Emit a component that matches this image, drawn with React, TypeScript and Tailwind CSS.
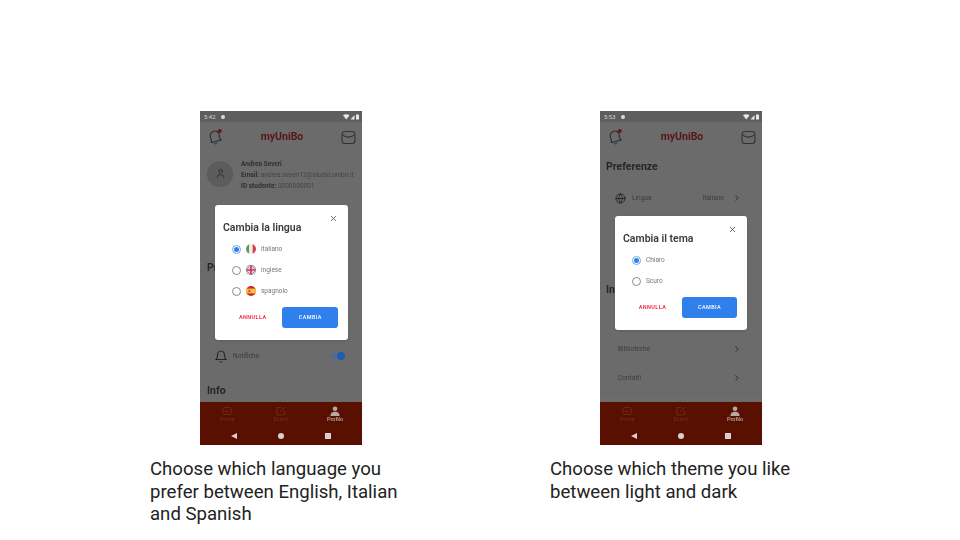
// myUniBo settings slide: language and theme dialogs shown on two phones
import { useId, type ReactNode } from "react";
import { ChevronRight, Globe, User, X } from "lucide-react";

function StatusBar({ time }: { time: string }) {
  return (
    <div className="flex h-[11px] items-center justify-between bg-[#5e5e5e] pl-[4px] pr-[2px] text-[6px] text-[#d8d8d8]">
      <div className="flex items-center gap-[5px]">
        <span>{time}</span>
        <span className="h-[4px] w-[4px] rounded-full bg-[#d8d8d8]" />
      </div>
      <svg width="17" height="6" viewBox="0 0 17 6" fill="#e8e8e8">
        <path d="M0 1.2C2-.2 4.500-.2 6.500 1.200L3.250 5.500Z" />
        <path d="M7.500 5.500L11.500 1V5.500Z" />
        <rect x="13" y="0.500" width="3" height="5" rx="0.500" />
      </svg>
    </div>
  );
}

function AppHeader() {
  return (
    <div className="flex h-[30px] items-center justify-between pl-[8px] pr-[6px]">
      <svg width="15" height="16" viewBox="0 0 15 16" fill="none">
        <path d="M4.500 2.800C7.500 1 11 2.500 11.200 6C11.300 8.500 12 9.800 13 11L3.500 13.500C3.900 11.800 3.300 10.500 2.400 8.800C1.500 6.800 2.500 4 4.500 2.800Z" stroke="#2a3030" strokeWidth="1.200" />
        <path d="M6 14.200C7 15.400 8.500 15 9 13.600" stroke="#2a4a48" strokeWidth="1.200" />
        <circle cx="11.800" cy="2" r="2" fill="#7a1414" />
      </svg>
      <span className="text-[10.500px] font-bold text-[#5a1616]">myUniBo</span>
      <svg width="15" height="15" viewBox="0 0 15 15" fill="none" stroke="#333333" strokeWidth="1.100">
        <rect x="1" y="1.500" width="13" height="12" rx="3" />
        <path d="M1.500 4.500C4.500 8 10.500 8 13.500 4.500" />
      </svg>
    </div>
  );
}

function BottomNav() {
  return (
    <div className="bg-[#5a1000] pb-[1px]">
      <div className="flex h-[25px] items-center justify-between px-[14px] text-[5.500px] leading-[7px]">
        <div className="flex w-[26px] flex-col items-center text-[#74301f]">
          <svg width="10" height="10" viewBox="0 0 10 10" fill="none" stroke="#74301f" strokeWidth="0.800">
            <rect x="1" y="1.500" width="8" height="7" rx="1" />
            <path d="M3 4.500L5 6L7 4.500" />
          </svg>
          <span>Home</span>
        </div>
        <div className="flex w-[26px] flex-col items-center text-[#74301f]">
          <svg width="10" height="10" viewBox="0 0 10 10" fill="none" stroke="#74301f" strokeWidth="0.800">
            <path d="M8.500 5V9H1V1.500H5" />
            <path d="M4 6L9 1" />
          </svg>
          <span>Esami</span>
        </div>
        <div className="flex w-[26px] flex-col items-center font-medium text-[#b5a8a5]">
          <svg width="10" height="10" viewBox="0 0 10 10" fill="#b5a8a5">
            <circle cx="5" cy="2.800" r="2.300" />
            <path d="M.5 10C.5 6.500 2.500 5.700 5 5.700S9.500 6.500 9.500 10Z" />
          </svg>
          <span>Profilo</span>
        </div>
      </div>
      <div className="flex h-[17px] items-center justify-between px-[31px]">
        <span className="h-0 w-0 border-y-[3.500px] border-r-[6px] border-y-transparent border-r-[#d8d0ce]" />
        <span className="h-[6px] w-[6px] rounded-full bg-[#d8d0ce]" />
        <span className="h-[6px] w-[6px] bg-[#d8d0ce]" />
      </div>
    </div>
  );
}

function Radio({ on }: { on?: boolean }) {
  return (
    <span className={`flex h-[9px] w-[9px] shrink-0 items-center justify-center rounded-full border ${on ? "border-[#6fa8f0]" : "border-[#8a8a8a]"}`}>
      {on && <span className="h-[5px] w-[5px] rounded-full bg-[#2f80ed]" />}
    </span>
  );
}

function FlagIt() {
  const id = useId();
  return (
    <svg width="10" height="10" viewBox="0 0 10 10">
      <clipPath id={id}><circle cx="5" cy="5" r="5" /></clipPath>
      <g clipPath={`url(#${id})`}>
        <rect width="3.400" height="10" fill="#5aa04a" />
        <rect x="3.400" width="3.200" height="10" fill="#f0f0f0" />
        <rect x="6.600" width="3.400" height="10" fill="#d8404a" />
      </g>
    </svg>
  );
}

function FlagUk() {
  const id = useId();
  return (
    <svg width="10" height="10" viewBox="0 0 10 10">
      <clipPath id={id}><circle cx="5" cy="5" r="5" /></clipPath>
      <g clipPath={`url(#${id})`}>
        <rect width="10" height="10" fill="#3f4f9a" />
        <path d="M0 0L10 10M10 0L0 10" stroke="#eeeeee" strokeWidth="2" />
        <path d="M0 0L10 10M10 0L0 10" stroke="#c8405a" strokeWidth="0.700" />
        <path d="M5 0V10M0 5H10" stroke="#eeeeee" strokeWidth="3" />
        <path d="M5 0V10M0 5H10" stroke="#c8304a" strokeWidth="1.600" />
      </g>
    </svg>
  );
}

function FlagEs() {
  const id = useId();
  return (
    <svg width="10" height="10" viewBox="0 0 10 10">
      <clipPath id={id}><circle cx="5" cy="5" r="5" /></clipPath>
      <g clipPath={`url(#${id})`}>
        <rect width="10" height="10" fill="#d8202a" />
        <rect y="2.600" width="10" height="4.800" fill="#f5c542" />
        <rect x="2.400" y="3.800" width="2" height="2.400" fill="#c0503a" />
      </g>
    </svg>
  );
}

function Dialog({ title, gap, className, children }: { title: string; gap: string; className: string; children: ReactNode }) {
  return (
    <div className={`absolute left-[15px] rounded-[3px] bg-white pl-[8px] pr-[10px] shadow-sm ${className}`}>
      <X className="absolute right-[10px] top-[9px] h-[9px] w-[9px] text-[#444444]" strokeWidth={2} />
      <div className="pt-[16px] text-[10.500px] font-semibold leading-[14px] text-[#3a3a3a]">{title}</div>
      <div className={`flex flex-col pl-[9px] text-[6.500px] text-[#777777] ${gap}`}>{children}</div>
      <div className="absolute bottom-[12px] left-[8px] right-[10px] flex items-center justify-between text-[5.500px] font-bold tracking-[0.4px]">
        <span className="w-[60px] text-center text-[#f0384f]">ANNULLA</span>
        <span className="flex h-[21px] w-[56px] items-center justify-center rounded-[3px] bg-[#2f80ed] font-medium text-white">CAMBIA</span>
      </div>
    </div>
  );
}

function Row({ label, value, icon }: { label: string; value?: string; icon?: ReactNode }) {
  return (
    <div className={`flex h-[29px] items-center border-b border-[#676767] pr-[20px] text-[6.500px] text-[#3c3c3c] ${icon ? "pl-[15px]" : "pl-[18px]"}`}>
      {icon}
      <span className="pt-[2px]">{label}</span>
      <span className="ml-auto pt-[2px]">{value}</span>
      <ChevronRight className="ml-[8px] h-[10px] w-[10px] text-[#2c2c2c]" strokeWidth={2.200} />
    </div>
  );
}

function LanguagePhone() {
  return (
    <div className="relative flex h-[334px] w-[162px] flex-col overflow-hidden bg-[#6b6b6b] blur-[0.4px]">
      <StatusBar time="5:42" />
      <AppHeader />
      <div className="flex-1">
        <div className="flex items-start pl-[7px] pt-[7px]">
          <div className="mt-[1.500px] flex h-[26px] w-[26px] items-center justify-center rounded-full bg-[#5c5c5c]">
            <User className="h-[11px] w-[11px] text-[#262626]" strokeWidth={1.6} />
          </div>
          <div className="ml-[8px] flex flex-col text-[6.500px] leading-[11px] text-[#303030]">
            <span className="font-bold">Andrea Severi</span>
            <span className="whitespace-nowrap"><b>Email:</b> <span className="text-[#444444]">andrea.severi12@studio.unibo.it</span></span>
            <span><b>ID studente:</b> <span className="text-[#444444]">0000000001</span></span>
          </div>
        </div>
        <div className="pl-[7px] pt-[69px] text-[10.500px] font-bold leading-[14px] text-[#262626]">Preferenze</div>
        <div className="mt-[67px] flex h-[28px] items-center pl-[15px] pr-[17px] text-[6.500px] text-[#3c3c3c]">
          <svg className="mr-[6px]" width="12" height="13" viewBox="0 0 12 13" fill="none" stroke="#262626" strokeWidth="1.100">
            <path d="M6 1C3.500 1 2.500 3 2.500 5.500C2.500 7.500 1.800 8.500 1 9.500H11C10.200 8.500 9.500 7.500 9.500 5.500C9.500 3 8.500 1 6 1Z" />
            <path d="M4.800 11.500C5.300 12.200 6.700 12.200 7.200 11.500" />
          </svg>
          <span className="pt-[2px]">Notifiche</span>
          <span className="relative ml-auto h-[5px] w-[14px] rounded-full bg-[#496d9c]">
            <span className="absolute -top-[1.500px] right-0 h-[8px] w-[8px] rounded-full bg-[#1f5cb0]" />
          </span>
        </div>
        <div className="pl-[7px] pt-[14px] text-[10.500px] font-bold leading-[14px] text-[#262626]">Info</div>
      </div>
      <BottomNav />
      <Dialog title="Cambia la lingua" gap="gap-[11px] pt-[9px]" className="top-[94px] h-[135px] w-[133px]">
        <div className="flex h-[10px] items-center gap-[5px]"><Radio on /><FlagIt /><span className="pt-[2px]">italiano</span></div>
        <div className="flex h-[10px] items-center gap-[5px]"><Radio /><FlagUk /><span className="pt-[2px]">inglese</span></div>
        <div className="flex h-[10px] items-center gap-[5px]"><Radio /><FlagEs /><span className="pt-[2px]">spagnolo</span></div>
      </Dialog>
    </div>
  );
}

function ThemePhone() {
  return (
    <div className="relative flex h-[334px] w-[162px] flex-col overflow-hidden bg-[#6b6b6b] blur-[0.4px]">
      <StatusBar time="5:53" />
      <AppHeader />
      <div className="flex-1">
        <div className="pl-[6px] pt-[8px] text-[10.500px] font-bold leading-[14px] text-[#262626]">Preferenze</div>
        <div className="mt-[10px]">
          <Row
            label="Lingua"
            value="Italiano"
            icon={<Globe className="mr-[6px] h-[11px] w-[11px] text-[#1f1f1f]" strokeWidth={1.8} />}
          />
        </div>
        <div className="pl-[6px] pt-[70px] text-[10.500px] font-bold leading-[14px] text-[#262626]">Info</div>
        <div className="mt-[38px]">
          <Row label="Biblioteche" />
          <Row label="Contatti" />
        </div>
      </div>
      <BottomNav />
      <Dialog title="Cambia il tema" gap="gap-[11px] pt-[9px]" className="top-[105px] h-[114px] w-[132px]">
        <div className="flex h-[10px] items-center gap-[5px]"><Radio on /><span className="pt-[2px]">Chiaro</span></div>
        <div className="flex h-[10px] items-center gap-[5px]"><Radio /><span className="pt-[2px]">Scuro</span></div>
      </Dialog>
    </div>
  );
}

function Slide({ phone, caption }: { phone: ReactNode; caption: ReactNode }) {
  return (
    <div className="w-[400px]">
      <div className="pl-[50px]">{phone}</div>
      <p className="mt-[13px] text-[18.600px] leading-[22.500px] text-[#222222]">{caption}</p>
    </div>
  );
}

export default function App() {
  return (
    <div className="flex h-[540px] w-[960px] overflow-hidden bg-white pl-[150px] pt-[111px] [font-family:Roboto,sans-serif]">
      <Slide
        phone={<LanguagePhone />}
        caption={<>Choose which language you<br />prefer between English, Italian<br />and Spanish</>}
      />
      <Slide
        phone={<ThemePhone />}
        caption={<>Choose which theme you like<br />between light and dark</>}
      />
    </div>
  );
}
